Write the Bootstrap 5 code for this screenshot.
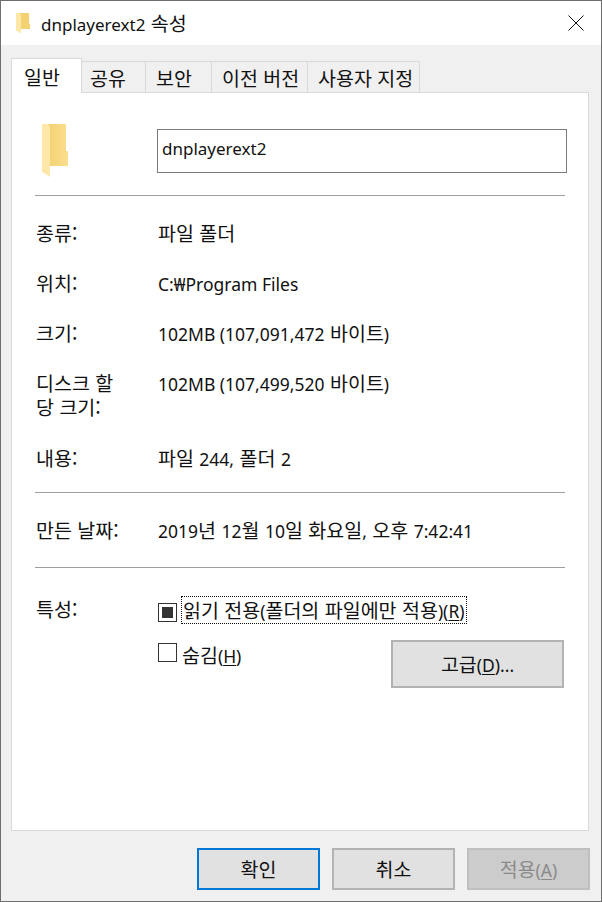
<!DOCTYPE html>
<html lang="ko">
<head>
<meta charset="utf-8">
<title>dnplayerext2 속성</title>
<link href="https://cdn.jsdelivr.net/npm/bootstrap@5.3.0/dist/css/bootstrap.min.css" rel="stylesheet">
<style>
html,body{margin:0;height:100%;}
body{width:602px;height:902px;overflow:hidden;background:#f0f0f0;color:#111;font:19.5px/24px "Noto Sans CJK KR","Noto Sans",sans-serif;}
.la{font:17.5px/1 "Noto Sans",sans-serif;}
.win{height:902px;border:1px solid #6f6f6f;background:#f0f0f0;}
.ttl{height:44px;background:#fff;padding-left:15px;color:#111;}
.ttl .nm{margin-left:11px;line-height:24px;}
.ttl .la{font-size:17px;}
.closex{margin-right:17px;}
.tabs-wrap{padding:13px 0 0 10px;height:47px;}
.nav-tabs.tb{border:0;flex-wrap:nowrap;height:34px;align-items:flex-end;}
.tb .nav-link{height:31px;padding:4px 0 0 10px;text-align:left;white-space:nowrap;background:#f0f0f0;border:1px solid #d9d9d9;border-width:1px 1px 0 0;border-radius:0;color:#111;margin:0;line-height:24px;}
.tb .nav-item:nth-child(2) .nav-link{width:64px;padding-left:8px;}
.tb .nav-item:nth-child(3) .nav-link{width:66px;}
.tb .nav-item:nth-child(4) .nav-link{width:96px;}
.tb .nav-item:nth-child(5) .nav-link{width:112px;}
.tb .nav-link.active{width:71px;padding:6px 0 0 12px;background:#fff;border:1px solid #d9d9d9;border-bottom:0;color:#111;position:relative;z-index:2;margin-bottom:-1px;height:35px;}
.pane{width:578px;height:739px;margin-left:10px;background:#fff;border:1px solid #d9d9d9;padding:0 23px;}
.toprow{height:102px;padding-top:36px;}
.fold{margin-left:7px;margin-top:-5px;flex:none;}
.namebox.form-control{margin-left:88px;width:410px;flex:none;height:44px;border:1px solid #7a7a7a;border-radius:0;padding:0 4px 5px 4px;font:17px/24px "Noto Sans",sans-serif;color:#111;box-shadow:none;}
.ln{border:0;border-top:1px solid #a0a0a0;opacity:1;margin:0;width:530px;}
.kv{display:flex;}
.kv .k{width:123px;flex:none;padding-left:1px;}
.kv .v{flex:1;}
.chk{width:19px;height:19px;border:1px solid #333;background:#fff;flex:none;display:flex;align-items:center;justify-content:center;}
.chk i{display:block;width:11px;height:11px;background:#333;}
.foc{outline:1px dotted #111;padding:0 1px;height:26px;line-height:26px;margin-left:5px;margin-bottom:4px;white-space:nowrap;}
.plain{margin-left:5px;margin-top:3px;line-height:24px;}
.wbtn.btn{width:123px;height:42px;border:2px solid #b3b3b3;border-radius:0;background:#e1e1e1;color:#111;padding:0;font-size:19.5px;line-height:24px;}
.wbtn.adv{width:173px;height:48px;margin-left:auto;margin-right:1px;}
.wbtn.def{border-color:#0078d7;}
.wbtn.btn:disabled{background:#cccccc;border-color:#bfbfbf;color:#8a8a8a;opacity:1;}
.foot{padding:17px 11px 0 0;gap:12px;}
u{text-underline-offset:2px;}
</style>
</head>
<body>
<div class="win">
  <div class="ttl d-flex align-items-center">
    <svg width="14" height="20" viewBox="0 0 14 20"><path d="M0 0h13v11l1 0v5H5v4l-5-3z" fill="#f4d272"/><path d="M0 0h4l1 2v18l-5-3z" fill="#fde7a6"/></svg>
    <span class="nm"><span class="la">dnplayerext2</span> 속성</span>
    <svg class="closex ms-auto" width="16" height="16" viewBox="0 0 16 16"><path d="M.5.5l15 15M15.500.5l-15 15" stroke="#111" stroke-width="1" fill="none"/></svg>
  </div>
  <div class="tabs-wrap">
    <ul class="nav nav-tabs tb">
      <li class="nav-item"><a class="nav-link active" href="#">일반</a></li>
      <li class="nav-item"><a class="nav-link" href="#">공유</a></li>
      <li class="nav-item"><a class="nav-link" href="#">보안</a></li>
      <li class="nav-item"><a class="nav-link" href="#">이전 버전</a></li>
      <li class="nav-item"><a class="nav-link" href="#">사용자 지정</a></li>
    </ul>
  </div>
  <div class="pane">
    <div class="toprow d-flex align-items-start">
      <svg class="fold" width="27" height="53" viewBox="0 0 27 53"><defs><linearGradient id="g" x1="0" x2="1"><stop offset="0" stop-color="#f0cd6a"/><stop offset="1" stop-color="#fbdf8f"/></linearGradient></defs><path d="M0 0h24v27h2v15H8z" fill="url(#g)"/><path d="M0 0h6l2 3v50l-6-4-2-1z" fill="#fde8aa"/></svg>
      <input class="form-control namebox" value="dnplayerext2" readonly>
    </div>
    <hr class="ln">
    <div class="kv" style="margin-top:25px"><div class="k">종류:</div><div class="v">파일 폴더</div></div>
    <div class="kv" style="margin-top:26px"><div class="k">위치:</div><div class="v"><span class="la">C:₩Program Files</span></div></div>
    <div class="kv" style="margin-top:26px"><div class="k">크기:</div><div class="v"><span class="la">102MB (107,091,472</span> 바이트<span class="la">)</span></div></div>
    <div class="kv" style="margin-top:26px"><div class="k">디스크 할<br>당 크기:</div><div class="v"><span class="la">102MB (107,499,520</span> 바이트<span class="la">)</span></div></div>
    <div class="kv" style="margin-top:27px"><div class="k">내용:</div><div class="v">파일 <span class="la">244,</span> 폴더 <span class="la">2</span></div></div>
    <hr class="ln" style="margin-top:22px">
    <div class="kv" style="margin-top:25px"><div class="k">만든 날짜:</div><div class="v"><span class="la">2019</span>년 <span class="la">12</span>월 <span class="la">10</span>일 화요일<span class="la">,</span> 오후 <span class="la">7:42:41</span></div></div>
    <hr class="ln" style="margin-top:25px">
    <div class="kv" style="margin-top:29px"><div class="k">특성:</div>
      <div class="v">
        <div class="d-flex align-items-center"><span class="chk"><i></i></span><span class="foc">읽기 전용<span class="la">(</span>폴더의 파일에만 적용<span class="la">)(<u>R</u>)</span></span></div>
        <div class="d-flex align-items-start" style="margin-top:13px">
          <span class="chk" style="margin-top:3px"></span><span class="plain">숨김<span class="la">(<u>H</u>)</span></span>
          <button type="button" class="btn wbtn adv">고급<span class="la">(<u>D</u>)...</span></button>
        </div>
      </div>
    </div>
  </div>
  <div class="foot d-flex justify-content-end">
    <button type="button" class="btn wbtn def">확인</button>
    <button type="button" class="btn wbtn">취소</button>
    <button type="button" class="btn wbtn" disabled>적용<span class="la">(<u>A</u>)</span></button>
  </div>
</div>
<script src="https://cdn.jsdelivr.net/npm/bootstrap@5.3.0/dist/js/bootstrap.bundle.min.js"></script>
</body>
</html>
